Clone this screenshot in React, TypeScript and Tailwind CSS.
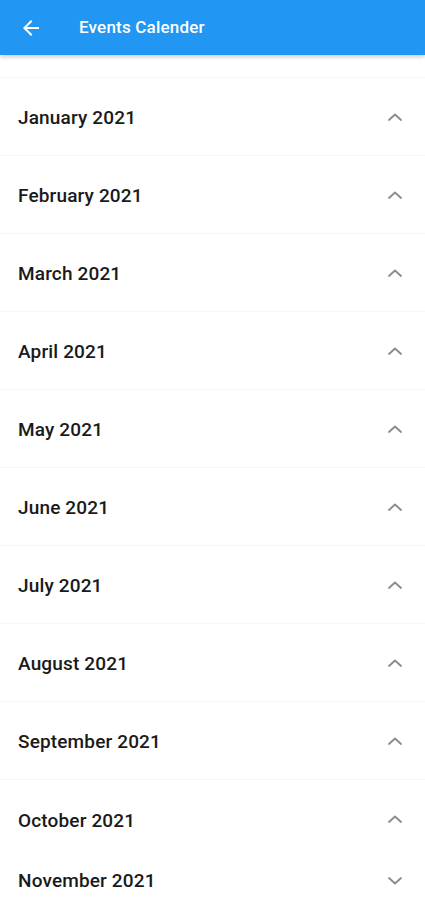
import React from "react";

const months = [
  "January 2021",
  "February 2021",
  "March 2021",
  "April 2021",
  "May 2021",
  "June 2021",
  "July 2021",
  "August 2021",
  "September 2021",
  "October 2021",
];

function Chevron({ up }: { up: boolean }) {
  return (
    <svg width="16" height="10" viewBox="0 0 16 10" className="text-[#8a8a8a]">
      {up ? (
        <path d="M2 8 L8 2.5 L14 8" fill="none" stroke="currentColor" strokeWidth="1.8" strokeLinecap="round" strokeLinejoin="round" />
      ) : (
        <path d="M2 2 L8 7.5 L14 2" fill="none" stroke="currentColor" strokeWidth="1.8" strokeLinecap="round" strokeLinejoin="round" />
      )}
    </svg>
  );
}

export default function App() {
  return (
    <div className="w-[425px] h-[900px] overflow-hidden bg-white" style={{ fontFamily: "Roboto, 'Liberation Sans', sans-serif" }}>
      <div className="relative z-10 h-[55px] bg-[#2196f3] flex items-center shadow-[0_2px_4px_rgba(0,0,0,0.2)]">
        <div className="w-[79px] pl-[19px] flex items-center">
          <svg width="24" height="24" viewBox="0 0 24 24">
            <path d="M20 11H7.83l5.59-5.59L12 4l-8 8 8 8 1.41-1.41L7.83 13H20v-2z" fill="#ffffff" />
          </svg>
        </div>
        <span className="text-white text-[17px] font-medium tracking-[0.2px]">Events Calender</span>
      </div>
      <div className="h-[23px] border-b border-[#f6f6f6]" />
      {months.map((m, i) => (
        <div
          key={m}
          className={
            i === months.length - 1
              ? "h-[78px] flex items-center justify-between pl-[18px] pr-[22px]"
              : "h-[78px] border-b border-[#f6f6f6] flex items-center justify-between pl-[18px] pr-[22px]"
          }
        >
          <span className="mt-[4px] text-[19px] font-medium text-[#1a1a1a] tracking-[0.15px]">{m}</span>
          <Chevron up />
        </div>
      ))}
      <div className="h-[45px] flex items-center justify-between pl-[18px] pr-[22px]">
        <span className="mt-[1px] text-[19px] font-medium text-[#1a1a1a] tracking-[0.15px]">November 2021</span>
        <Chevron up={false} />
      </div>
    </div>
  );
}
